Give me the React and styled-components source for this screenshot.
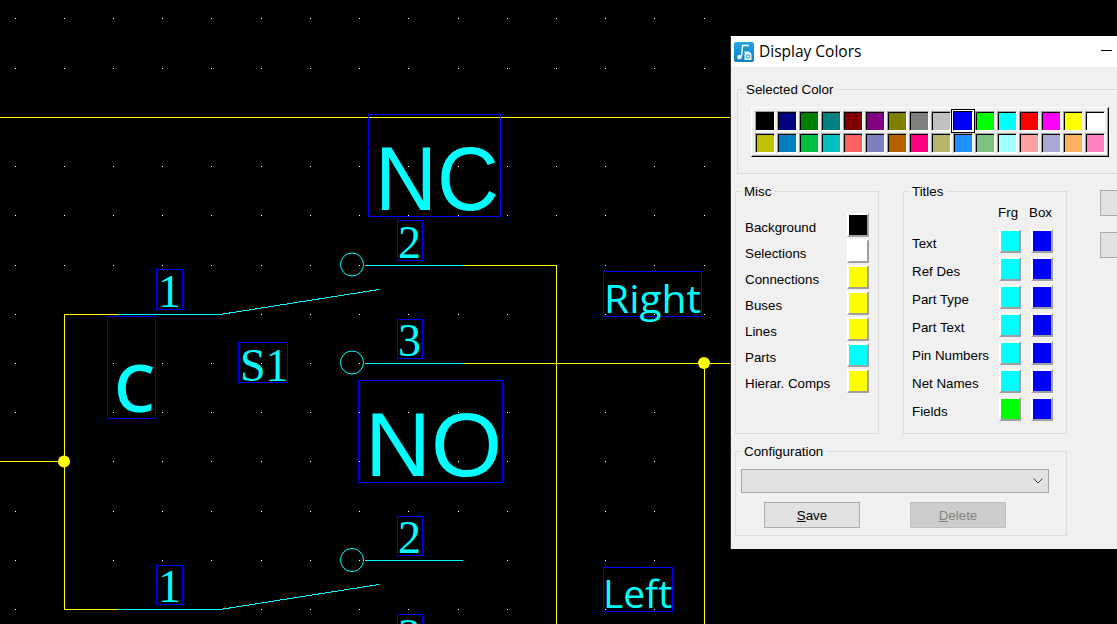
import React from "react";
import styled, { createGlobalStyle } from "styled-components";

const GlobalStyle = createGlobalStyle`
  html, body {
    margin: 0;
    background: #000;
  }
`;

const Screen = styled.div`
  position: relative;
  width: 1117px;
  height: 624px;
  overflow: hidden;
  background: #000;
`;

/* ---------- schematic ---------- */

const Sheet = styled.svg`
  position: absolute;
  left: 0;
  top: 0;
  display: block;
`;

const Dot = styled.rect`
  fill: #fff;
`;

const Wire = styled.line`
  stroke: ${(p) => (p.$part ? "#00ffff" : "#ffff00")};
  stroke-width: 1;
`;

const Pin = styled.circle`
  fill: none;
  stroke: #00ffff;
  stroke-width: 1;
`;

const Junction = styled.circle`
  fill: #ffff00;
`;

const TitleBox = styled.rect`
  fill: none;
  stroke: #0000ff;
  stroke-width: 1;
`;

const Title = styled.text`
  fill: #00ffff;
  font-family: ${(p) => p.$font};
  font-size: ${(p) => p.$size}px;
  font-weight: ${(p) => p.$weight || 400};
`;

const SERIF = '"Liberation Serif", serif';
const SANS = '"Liberation Sans", Arial, sans-serif';
const HUMAN = '"Open Sans", sans-serif';

const gridX = [15, 64, 113, 162, 211, 261, 310, 359, 408, 458, 507, 556, 605, 654, 704];
const gridY = [18, 68, 117, 166, 215, 265, 314, 363, 412, 461, 511, 560, 609];

const wires = [
  [0, 117.5, 731, 117.5],
  [0, 461.5, 64, 461.5],
  [64.5, 314, 64.5, 610],
  [64, 314.5, 118, 314.5],
  [64, 609.5, 118, 609.5],
  [463, 265.5, 556.5, 265.5],
  [556.5, 265, 556.5, 624],
  [463, 363.5, 731, 363.5],
  [704.5, 363, 704.5, 624],
];

const partLines = [
  [118, 314.5, 220, 314.5],
  [220, 314.5, 379, 289.5],
  [118, 609.5, 220, 609.5],
  [220, 609.5, 379, 584.5],
  [365, 265.5, 463, 265.5],
  [365, 363.5, 463, 363.5],
  [365, 560.5, 463, 560.5],
];

const boxes = [
  [368.5, 114.5, 132, 102],
  [397.5, 220.5, 25, 40],
  [397.5, 319.5, 25, 39],
  [603.5, 271.5, 98, 45],
  [156.5, 269.5, 26, 40],
  [107.5, 316.5, 48, 102],
  [238.5, 342.5, 49, 40],
  [358.5, 380.5, 144, 102],
  [397.5, 516.5, 25, 39],
  [397.5, 614.5, 25, 39],
  [603.5, 567.5, 69, 44],
  [156.5, 565.5, 26, 39],
];

const titles = [
  { text: "NC", x: 375, y: 210, size: 91, font: SANS, length: 124 },
  { text: "NO", x: 365, y: 476, size: 91, font: SANS, length: 137 },
  { text: "C", x: 114, y: 412, size: 65, font: HUMAN, weight: 600 },
  { text: "Right", x: 604, y: 313, size: 38, font: HUMAN, length: 97 },
  { text: "Left", x: 603, y: 608, size: 38, font: HUMAN, length: 69 },
  { text: "S1", x: 240, y: 381, size: 46, font: SERIF },
  { text: "1", x: 158, y: 307, size: 46, font: SERIF },
  { text: "1", x: 158, y: 602, size: 46, font: SERIF },
  { text: "2", x: 398, y: 258, size: 46, font: SERIF },
  { text: "3", x: 398, y: 356, size: 46, font: SERIF },
  { text: "2", x: 398, y: 553, size: 46, font: SERIF },
  { text: "3", x: 398, y: 651, size: 46, font: SERIF },
];

const Schematic = () => (
  <Sheet width="1117" height="624" viewBox="0 0 1117 624">
    {gridY.map((y) =>
      gridX.map((x) => <Dot key={`${x}-${y}`} x={x} y={y} width="1" height="1" />)
    )}
    <g shapeRendering="crispEdges">
      {wires.map(([x1, y1, x2, y2], i) => (
        <Wire key={i} x1={x1} y1={y1} x2={x2} y2={y2} />
      ))}
      {partLines.map(([x1, y1, x2, y2], i) => (
        <Wire key={i} $part x1={x1} y1={y1} x2={x2} y2={y2} />
      ))}
      {boxes.map(([x, y, w, h], i) => (
        <TitleBox key={i} x={x} y={y} width={w} height={h} />
      ))}
    </g>
    <Pin cx="352" cy="264.5" r="11.5" />
    <Pin cx="352" cy="362.5" r="11.5" />
    <Pin cx="352" cy="560" r="11.5" />
    <Junction cx="64" cy="461.5" r="6" />
    <Junction cx="704" cy="363" r="6" />
    {titles.map((t, i) => (
      <Title
        key={i}
        x={t.x}
        y={t.y}
        $size={t.size}
        $font={t.font}
        $weight={t.weight}
        textLength={t.length}
        lengthAdjust={t.length ? "spacingAndGlyphs" : undefined}
      >
        {t.text}
      </Title>
    ))}
  </Sheet>
);

/* ---------- dialog ---------- */

const Window = styled.div`
  position: absolute;
  left: 730px;
  top: 36px;
  width: 450px;
  border-left: 1px solid #2a2a2a;
  background: #f0f0f0;
  font-family: "Liberation Sans", Arial, sans-serif;
  font-size: 13.33px;
  color: #000;
`;

const TitleBar = styled.div`
  display: flex;
  align-items: center;
  gap: 5px;
  height: 31px;
  padding-left: 3px;
  background: #fff;
`;

const TitleText = styled.span`
  position: relative;
  top: -1px;
  font-family: "Open Sans", sans-serif;
  font-size: 15.5px;
  white-space: nowrap;
`;

const Minimize = styled.span`
  flex: none;
  width: 11px;
  height: 1px;
  margin: 0 0 2px 235px;
  background: #000;
`;

const Body = styled.div`
  display: flex;
  flex-direction: column;
  padding: 22px 0 13px 4px;
`;

const Group = styled.div`
  position: relative;
  flex: none;
  box-sizing: border-box;
  border: 1px solid #dcdcdc;
`;

const GroupTitle = styled.span`
  position: absolute;
  left: 5px;
  top: -8px;
  padding: 0 3px;
  background: #f0f0f0;
  line-height: 16px;
  white-space: nowrap;
`;

const SelectedGroup = styled(Group)`
  display: flex;
  align-items: flex-start;
  width: 420px;
  height: 85px;
  margin-left: 2px;
  padding: 17px 0 0 13px;
`;

const Palette = styled.div`
  display: grid;
  grid-template-columns: repeat(16, 22px);
  grid-auto-rows: 22px;
  padding: 2px;
  border: 1px solid;
  border-color: #fff #000 #000 #fff;
  box-shadow: inset -1px -1px 0 #a0a0a0;
`;

const PaletteCell = styled.div`
  display: flex;
  align-items: center;
  justify-content: center;
`;

const Swatch = styled.div`
  box-sizing: border-box;
  width: 20px;
  height: 20px;
  background: ${(p) => p.$color};
  border: 1px solid;
  border-color: ${(p) =>
    p.$selected ? "#000 #fff #fff #000" : "#a0a0a0 #fff #fff #a0a0a0"};
  box-shadow: ${(p) =>
    p.$selected
      ? "0 0 0 1px #fff, 0 0 0 2px #000"
      : "inset 1px 1px 0 #000"};
`;

const Columns = styled.div`
  display: flex;
  align-items: flex-start;
  margin-top: 17px;
`;

const MiscGroup = styled(Group)`
  display: flex;
  flex-direction: column;
  gap: 2px;
  width: 144px;
  height: 243px;
  padding: 21px 9px 0;
`;

const MiscRow = styled.div`
  display: flex;
  align-items: center;
  justify-content: space-between;
`;

const Label = styled.span`
  align-self: center;
  padding-top: 4px;
  white-space: nowrap;
`;

const ColorWell = styled.div`
  box-sizing: border-box;
  width: 22px;
  height: 24px;
  background: ${(p) => p.$color};
  border: 2px solid;
  border-color: #fff #a0a0a0 #a0a0a0 #fff;
`;

const TitlesGroup = styled(Group)`
  display: grid;
  grid-template-columns: 1fr 22px 22px;
  grid-auto-rows: 24px;
  grid-template-rows: 26px;
  column-gap: 10px;
  row-gap: 4px;
  width: 164px;
  height: 243px;
  margin-left: 24px;
  padding: 7px 13px 0 8px;
`;

const ColumnHead = styled.span`
  align-self: center;
  margin-left: ${(p) => p.$shift}px;
`;

const SideButtons = styled.div`
  display: flex;
  flex: none;
  flex-direction: column;
  gap: 16px;
  margin: -1px 0 0 33px;
`;

const SideButton = styled.div`
  box-sizing: border-box;
  width: 75px;
  height: 26px;
  background: #e1e1e1;
  border: 1px solid #adadad;
`;

const ConfigGroup = styled(Group)`
  width: 332px;
  height: 85px;
  margin-top: 17px;
  padding: 17px 0 0 5px;
`;

const ConfigSelect = styled.div`
  box-sizing: border-box;
  display: flex;
  align-items: center;
  justify-content: flex-end;
  width: 308px;
  height: 24px;
  padding-right: 5px;
  background: #e1e1e1;
  border: 1px solid #a6a6a6;
`;

const ConfigButtons = styled.div`
  display: flex;
  gap: 50px;
  margin: 9px 0 0 23px;
`;

const Button = styled.div`
  box-sizing: border-box;
  display: flex;
  align-items: center;
  justify-content: center;
  width: 96px;
  height: 26px;
  background: ${(p) => (p.$disabled ? "#cccccc" : "#e1e1e1")};
  border: 1px solid ${(p) => (p.$disabled ? "#bfbfbf" : "#adadad")};
  color: ${(p) => (p.$disabled ? "#838383" : "#000")};
`;

const AppIcon = () => (
  <svg width="20" height="20" viewBox="0 0 20 20">
    <defs>
      <linearGradient id="appIconFill" x1="0" y1="0" x2="0" y2="1">
        <stop offset="0" stopColor="#1fa8e6" />
        <stop offset="1" stopColor="#0c7fbf" />
      </linearGradient>
    </defs>
    <rect width="20" height="20" rx="2" fill="url(#appIconFill)" />
    <path d="M15 3.5H8.6L7.6 14" fill="none" stroke="#fff" strokeWidth="1.4" />
    <circle cx="5.6" cy="15" r="2.2" fill="#fff" />
    <path d="M10.5 9.5h4.5l2.5 2.5v6h-7z" fill="#e8f6fc" />
    <circle cx="14" cy="14.5" r="1.7" fill="none" stroke="#1a8fcf" strokeWidth="1" />
  </svg>
);

const Chevron = () => (
  <svg width="10" height="6" viewBox="0 0 10 6">
    <path d="M0.5 0.5L5 5L9.5 0.5" fill="none" stroke="#404040" strokeWidth="1" />
  </svg>
);

const standard = [
  "#000000", "#000080", "#008000", "#008080", "#800000", "#800080", "#808000", "#808080",
  "#c0c0c0", "#0000ff", "#00ff00", "#00ffff", "#ff0000", "#ff00ff", "#ffff00", "#ffffff",
  "#c0c000", "#0080c0", "#00c040", "#00c0c0", "#ff6060", "#8080c0", "#b86000", "#ff0080",
  "#b4b46a", "#2090ff", "#80c080", "#a0ffff", "#ffa0a0", "#a8a8d0", "#ffb060", "#ff80c0",
];

const misc = [
  ["Background", "#000000"],
  ["Selections", "#ffffff"],
  ["Connections", "#ffff00"],
  ["Buses", "#ffff00"],
  ["Lines", "#ffff00"],
  ["Parts", "#00ffff"],
  ["Hierar. Comps", "#ffff00"],
];

const titleColors = [
  ["Text", "#00ffff"],
  ["Ref Des", "#00ffff"],
  ["Part Type", "#00ffff"],
  ["Part Text", "#00ffff"],
  ["Pin Numbers", "#00ffff"],
  ["Net Names", "#00ffff"],
  ["Fields", "#00ff00"],
];

const DisplayColors = () => (
  <Window>
    <TitleBar>
      <AppIcon />
      <TitleText>Display Colors</TitleText>
      <Minimize />
    </TitleBar>
    <Body>
      <SelectedGroup>
        <GroupTitle>Selected Color</GroupTitle>
        <Palette>
          {standard.map((color, i) => (
            <PaletteCell key={i}>
              <Swatch $color={color} $selected={i === 9} />
            </PaletteCell>
          ))}
        </Palette>
      </SelectedGroup>
      <Columns>
        <MiscGroup>
          <GroupTitle>Misc</GroupTitle>
          {misc.map(([name, color]) => (
            <MiscRow key={name}>
              <Label>{name}</Label>
              <ColorWell $color={color} />
            </MiscRow>
          ))}
        </MiscGroup>
        <TitlesGroup>
          <GroupTitle>Titles</GroupTitle>
          <span />
          <ColumnHead $shift={-1}>Frg</ColumnHead>
          <ColumnHead $shift={-2}>Box</ColumnHead>
          {titleColors.map(([name, color]) => (
            <React.Fragment key={name}>
              <Label>{name}</Label>
              <ColorWell $color={color} />
              <ColorWell $color="#0000ff" />
            </React.Fragment>
          ))}
        </TitlesGroup>
        <SideButtons>
          <SideButton />
          <SideButton />
        </SideButtons>
      </Columns>
      <ConfigGroup>
        <GroupTitle>Configuration</GroupTitle>
        <ConfigSelect>
          <Chevron />
        </ConfigSelect>
        <ConfigButtons>
          <Button>
            <span>
              <u>S</u>ave
            </span>
          </Button>
          <Button $disabled>
            <span>
              <u>D</u>elete
            </span>
          </Button>
        </ConfigButtons>
      </ConfigGroup>
    </Body>
  </Window>
);

export default function App() {
  return (
    <Screen>
      <GlobalStyle />
      <Schematic />
      <DisplayColors />
    </Screen>
  );
}
